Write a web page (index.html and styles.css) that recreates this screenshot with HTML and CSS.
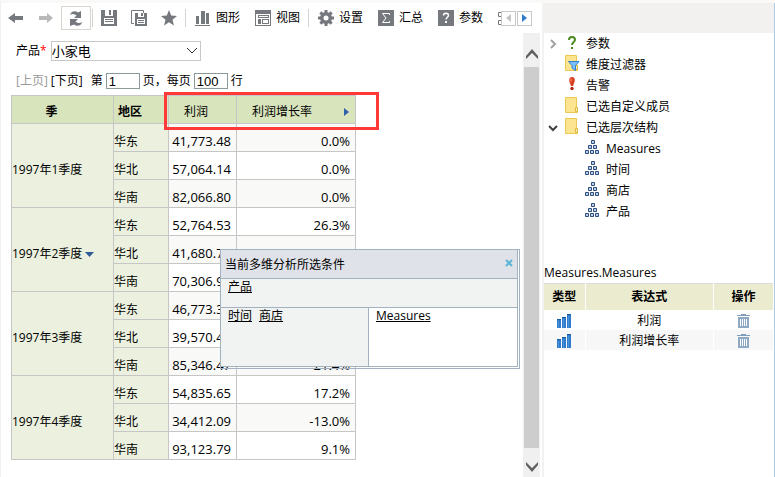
FILE: index.html
```html
<!DOCTYPE html>
<html lang="zh-CN">
<head>
    <meta charset="UTF-8">
    <meta name="viewport" content="width=device-width, initial-scale=1.0">
    <title>多维分析</title>
    <link rel="stylesheet" href="styles.css">
</head>
<body>
    <svg class="defs" aria-hidden="true">
        <symbol id="folder" viewBox="0 0 16 16">
            <path d="M.5 .5h11v10h1v5H.5z" fill="#fde490" stroke="#ecc850"/>
            <path d="M10.500 10.500h2v4h-2z" fill="#fff0b0" stroke="#e0b93c"/>
        </symbol>
        <symbol id="cube" viewBox="0 0 16 16">
            <path d="M6.500 1.500h3v3h-3zM3.500 6.500h3v3h-3zM8.500 6.500h3v3h-3zM.5 11.500h3v3h-3zM5.500 11.500h3v3h-3zM10.500 11.500h3v3h-3z" fill="#b9d3f2" stroke="#2f4d78"/>
        </symbol>
        <symbol id="bars" viewBox="0 0 16 16">
            <path d="M1 7h4v8H1zM6 5h4v10H6zM11 2h4v13h-4z" fill="#2f7ccd"/>
            <path d="M1 6h4v1H1zM6 4h4v1H6zM11 1h4v1h-4z" fill="#1c5a9e"/>
            <path d="M2 8h1v7H2zM7 6h1v9H7zM12 3h1v12h-1z" fill="#4a92da"/>
        </symbol>
        <symbol id="trash" viewBox="0 0 14 14">
            <path d="M4 0h5v1h4v1H0V1h4z" fill="#7f9cba"/>
            <path d="M1 3h11v11H1z" fill="#8fa9c4"/>
            <path d="M3 5h1v7H3zM5 5h1v7H5zM7 5h1v7H7zM9 5h1v7H9z" fill="#fff"/>
        </symbol>
    </svg>

    <main class="workspace">
        <div class="toolbar">
            <div class="tools">
                <button class="icon-btn" aria-label="后退"><svg width="16" height="16"><path d="M0 8l7-5v3h8v4H7v3z" fill="#75787c"/></svg></button>
                <button class="icon-btn" aria-label="前进"><svg width="16" height="16"><path d="M15 8L9 3v3H1v4h8v3z" fill="#b9b9b9"/></svg></button>
                <button class="icon-btn framed" aria-label="刷新"><svg width="16" height="18" fill="#75787c"><path d="M2 6c1-4 5-5 8-2.500L13 2v7H6l2.500-2.500C6 4.500 4 4.500 2 6z"/><path d="M14 13c-1 4-5 5-8 2.500L2 17v-7h8l-2.500 2.500c2.500 2 4.500 2 6.500.5z"/></svg></button>
                <span class="sep"></span>
                <button class="icon-btn" aria-label="保存"><svg width="16" height="16"><path d="M0 0h16v16H0z" fill="#75787c"/><path d="M4 0h8v6H4zM3 8h10v6H3z" fill="#fff"/><path d="M8 0h2v5H8zM4 9h8v1H4zM4 11h8v1H4z" fill="#75787c"/></svg></button>
                <button class="icon-btn" aria-label="另存为"><svg width="16" height="16"><path d="M3 13.500H.5V.5h12V3" fill="none" stroke="#75787c"/><path d="M4 3h12v13H4z" fill="#75787c"/><path d="M7 3h6v4H7zM6 9h8v5H6z" fill="#fff"/><path d="M10 3h2v3h-2zM7 10h6v1H7zM7 12h6v1H7z" fill="#75787c"/></svg></button>
                <button class="icon-btn" aria-label="收藏"><svg width="16" height="16"><path d="M8 0l2.200 5.500 5.800.4-4.500 3.800L13 15.500 8 12.300 3 15.500l1.500-5.800L0 5.900l5.800-.4z" fill="#75787c"/></svg></button>
                <span class="sep"></span>
                <button class="tool"><svg width="16" height="16"><path d="M1 6h3v8H1zM6 1h4v13H6zM11 3h3v11h-3zM0 15h15v1H0z" fill="#75787c"/></svg>图形</button>
                <button class="tool"><svg width="16" height="16"><path d="M0 0h16v16H0z" fill="#75787c"/><path d="M1 4h14v11H1z" fill="#fff"/><path d="M3 5h11v3H3zM3 9h3v5H3zM7 9h7v5H7z" fill="#75787c"/><path d="M4 6h9v1H4zM8 10h5v3H8z" fill="#fff"/></svg>视图</button>
                <span class="sep"></span>
                <button class="tool"><svg width="16" height="16"><g fill="#75787c"><path d="M6.500 0h3v16h-3z"/><path d="M6.500 0h3v16h-3z" transform="rotate(45 8 8)"/><path d="M6.500 0h3v16h-3z" transform="rotate(90 8 8)"/><path d="M6.500 0h3v16h-3z" transform="rotate(135 8 8)"/><circle cx="8" cy="8" r="6"/></g><circle cx="8" cy="8" r="2.500" fill="#fff"/></svg>设置</button>
                <button class="tool"><svg width="16" height="16"><path d="M0 0h16v16H0z" fill="#75787c"/><path d="M11.500 5V3.500h-7L8 8l-3.500 4.500h7V11" fill="none" stroke="#fff"/></svg>汇总</button>
                <button class="tool"><svg width="16" height="16"><path d="M0 0h16v16H0z" fill="#75787c"/><path d="M5.500 5.500c0-3 5-3 5 0 0 1.500-2.500 2-2.500 4" fill="none" stroke="#fff" stroke-width="1.500"/><path d="M7 11h2v2H7z" fill="#fff"/></svg>参数</button>
                <button class="tool" aria-label="更多"><svg width="16" height="16"><path d="M.5 2.500h4v4h-4zM.5 10.500h4v4h-4z" fill="none" stroke="#75787c"/></svg></button>
            </div>
            <button class="scroll-btn" aria-label="向左"><svg width="5" height="8"><path d="M5 0v8L0 4z" fill="#c4c4c4"/></svg></button>
            <button class="scroll-btn" aria-label="向右"><svg width="5" height="8"><path d="M0 0v8l5-4z" fill="#2f7ccd"/></svg></button>
        </div>

        <div class="view">
            <div class="report">
                <div class="param">
                    <label for="product">产品<span class="required">*</span></label>
                    <div class="select-box">
                        <select id="product"><option>小家电</option></select>
                        <svg width="12" height="7"><path d="M1 1l5 5 5-5" fill="none" stroke="#333"/></svg>
                    </div>
                </div>
                <div class="pager">
                    <a class="disabled">[上页]</a>
                    <a href="#">[下页]</a>
                    <label for="page">第</label>
                    <input type="text" id="page" value="1">
                    <label for="rows">页，每页</label>
                    <input type="text" id="rows" value="100">
                    <span>行</span>
                </div>

                <div class="grid-wrap">
                    <table class="pivot">
                        <colgroup>
                            <col class="c-quarter"><col class="c-region"><col class="c-profit"><col class="c-growth">
                        </colgroup>
                        <thead>
                            <tr>
                                <th>季</th>
                                <th>地区</th>
                                <th class="measure">利润</th>
                                <th class="measure"><div class="measure-head">利润增长率<svg width="5" height="8"><path d="M0 0v8l5-4z" fill="#2f62a8"/></svg></div></th>
                            </tr>
                        </thead>
                        <tbody>
                            <tr><th rowspan="3">1997年1季度</th><th>华东</th><td>41,773.48</td><td>0.0%</td></tr>
                            <tr><th>华北</th><td>57,064.14</td><td>0.0%</td></tr>
                            <tr><th>华南</th><td>82,066.80</td><td>0.0%</td></tr>
                            <tr><th rowspan="3">1997年2季度<svg class="drop" width="9" height="5"><path d="M0 0h9L4.500 5z" fill="#2f5a95"/></svg></th><th>华东</th><td>52,764.53</td><td>26.3%</td></tr>
                            <tr><th>华北</th><td>41,680.77</td><td>-27.0%</td></tr>
                            <tr><th>华南</th><td>70,306.94</td><td>-14.3%</td></tr>
                            <tr><th rowspan="3">1997年3季度</th><th>华东</th><td>46,773.34</td><td>-11.4%</td></tr>
                            <tr><th>华北</th><td>39,570.42</td><td>-5.1%</td></tr>
                            <tr><th>华南</th><td>85,346.47</td><td>21.4%</td></tr>
                            <tr><th rowspan="3">1997年4季度</th><th>华东</th><td>54,835.65</td><td>17.2%</td></tr>
                            <tr><th>华北</th><td>34,412.09</td><td>-13.0%</td></tr>
                            <tr><th>华南</th><td>93,123.79</td><td>9.1%</td></tr>
                        </tbody>
                    </table>

                    <div class="highlight"></div>

                    <section class="conditions">
                        <div class="conditions-inner">
                            <header>
                                <span>当前多维分析所选条件</span>
                                <button aria-label="关闭"><svg width="8" height="8"><path d="M1 1l6 6M7 1L1 7" stroke="#5bb4d6" stroke-width="2"/></svg></button>
                            </header>
                            <div class="slicer"><a href="#">产品</a></div>
                            <div class="axes">
                                <div class="axis-rows"><a href="#">时间</a><a href="#">商店</a></div>
                                <div class="axis-cols"><a href="#">Measures</a></div>
                            </div>
                        </div>
                    </section>
                </div>
            </div>

            <div class="scrollbar">
                <button aria-label="向上滚动"><svg width="12" height="10"><path d="M0 7l6-7 6 7v3L6 4l-6 6z" fill="#606060"/></svg></button>
                <div class="thumb"></div>
                <button aria-label="向下滚动"><svg width="12" height="10"><path d="M0 3l6 7 6-7V0L6 6 0 0z" fill="#606060"/></svg></button>
            </div>
        </div>
    </main>

    <aside class="sidebar">
        <div class="side-head"></div>
        <ul class="tree">
            <li>
                <svg width="10" height="10"><path d="M3 1l4 4-4 4" fill="none" stroke="#a0a0a0" stroke-width="2"/></svg>
                <svg class="node" width="16" height="16"><path d="M4 6c0-4 6-4 6 0C10 8 7 8 7 11" fill="none" stroke="#4d8a1e" stroke-width="2"/><path d="M6 13h2v2H6z" fill="#4d8a1e"/></svg>
                <span>参数</span>
            </li>
            <li>
                <i class="blank"></i>
                <svg class="node" width="16" height="16"><use href="#folder"/><path d="M3.500 6.500H14L10.500 10.500v5L7 13v-2.500z" fill="#7cc0fa" stroke="#2f7fd0"/></svg>
                <span>维度过滤器</span>
            </li>
            <li>
                <i class="blank"></i>
                <svg class="node" width="16" height="16"><path d="M7 1c3 0 3 3 2.500 5L8 10H6L4.500 6C4 4 4 1 7 1z" fill="#d8401f"/><circle cx="7" cy="12.500" r="1.700" fill="#b52a12"/><path d="M6 2.500v3" stroke="#f5a08a"/></svg>
                <span>告警</span>
            </li>
            <li>
                <i class="blank"></i>
                <svg class="node" width="16" height="16"><use href="#folder"/></svg>
                <span>已选自定义成员</span>
            </li>
            <li>
                <svg width="10" height="10"><path d="M1 3l4 4 4-4" fill="none" stroke="#404040" stroke-width="2"/></svg>
                <svg class="node" width="16" height="16"><use href="#folder"/></svg>
                <span>已选层次结构</span>
            </li>
            <li class="child"><svg class="node" width="16" height="16"><use href="#cube"/></svg><span>Measures</span></li>
            <li class="child"><svg class="node" width="16" height="16"><use href="#cube"/></svg><span>时间</span></li>
            <li class="child"><svg class="node" width="16" height="16"><use href="#cube"/></svg><span>商店</span></li>
            <li class="child"><svg class="node" width="16" height="16"><use href="#cube"/></svg><span>产品</span></li>
        </ul>

        <h2>Measures.Measures</h2>
        <table class="members">
            <colgroup><col class="m-type"><col><col class="m-action"></colgroup>
            <thead>
                <tr><th>类型</th><th>表达式</th><th>操作</th></tr>
            </thead>
            <tbody>
                <tr>
                    <td><svg width="16" height="16"><use href="#bars"/></svg></td>
                    <td>利润</td>
                    <td><button aria-label="删除利润"><svg width="14" height="14"><use href="#trash"/></svg></button></td>
                </tr>
                <tr>
                    <td><svg width="16" height="16"><use href="#bars"/></svg></td>
                    <td>利润增长率</td>
                    <td><button aria-label="删除利润增长率"><svg width="14" height="14"><use href="#trash"/></svg></button></td>
                </tr>
            </tbody>
        </table>
    </aside>
</body>
</html>
```
FILE: styles.css
```css
* {
    box-sizing: border-box;
}
body {
    margin: 0;
    min-height: 100vh;
    display: grid;
    grid-template-columns: 1fr 233px;
    border-top: 3px solid #faf9f7;
    border-left: 1px solid #efefed;
    background: #fff;
    color: #000;
    font-family: "Open Sans", "Noto Sans CJK SC", sans-serif;
    font-size: 12px;
    line-height: 16px;
}
button {
    padding: 0;
    border: 0;
    background: none;
    font: inherit;
    color: inherit;
    cursor: pointer;
}
svg {
    display: block;
    flex: none;
}
a {
    color: inherit;
}
.defs {
    position: absolute;
    width: 0;
    height: 0;
}
.workspace {
    display: flex;
    flex-direction: column;
    min-width: 0;
}

/* toolbar */
.toolbar {
    display: flex;
    align-items: center;
    height: 30px;
    padding-right: 10px;
}
.tools {
    display: flex;
    flex: 1;
    align-items: center;
    min-width: 0;
    overflow: hidden;
}
.icon-btn {
    display: flex;
    flex: none;
    align-items: center;
    justify-content: center;
    width: 30px;
    height: 24px;
}
.icon-btn.framed {
    border: 1px solid #d6d6ce;
}
.sep {
    flex: none;
    width: 1px;
    height: 18px;
    margin: 0 1px;
    background: #d4d4d4;
}
.tool {
    display: flex;
    flex: none;
    align-items: center;
    gap: 5px;
    width: 60px;
    padding-left: 8px;
    white-space: nowrap;
}
.scroll-btn {
    display: flex;
    flex: none;
    align-items: center;
    justify-content: center;
    width: 15px;
    height: 15px;
    border: 1px solid #c8c8c8;
}
.scroll-btn + .scroll-btn {
    margin-left: 1px;
}

/* report */
.view {
    display: flex;
    flex: 1;
}
.report {
    flex: 1;
    min-width: 0;
    padding: 8px 0 0 10px;
}
.param {
    display: flex;
    align-items: center;
    padding-left: 5px;
}
.required {
    color: #f00;
}
.select-box {
    position: relative;
    width: 150px;
    margin-left: 4px;
}
.select-box select {
    display: block;
    width: 100%;
    height: 20px;
    padding: 0;
    border: 1px solid #c8c8c8;
    border-radius: 0;
    background: #fff;
    appearance: none;
    font-family: inherit;
    font-size: 13px;
    color: #000;
}
.select-box svg {
    position: absolute;
    right: 3px;
    top: 6px;
    pointer-events: none;
}
.pager {
    display: flex;
    align-items: center;
    gap: 3px;
    padding: 12px 0 0 5px;
}
.pager a {
    text-decoration: none;
}
.pager .disabled {
    color: #999;
}
.pager label[for="page"] {
    padding-left: 5px;
}
.pager input {
    width: 34px;
    height: 16px;
    padding: 0 2px;
    border: 1px solid #8a9a9a;
    font: 13px "Liberation Sans", sans-serif;
}

.grid-wrap {
    position: relative;
    margin-top: 6px;
}
.pivot {
    table-layout: fixed;
    width: 345px;
    border-collapse: collapse;
}
.c-quarter {
    width: 102px;
}
.c-region {
    width: 55px;
}
.c-profit {
    width: 68px;
}
.pivot th,
.pivot td {
    height: 28px;
    padding: 7px 5px 0 0;
    border: 1px solid #c6c6c6;
    white-space: nowrap;
}
.pivot thead th {
    padding: 5px 22px 0 0;
    background: #d8e4bc;
}
.pivot thead .measure {
    padding: 5px 6px 0 15px;
    font-weight: normal;
    text-align: left;
}
.measure-head {
    display: flex;
    align-items: center;
    justify-content: space-between;
}
.pivot tbody th {
    padding-top: 8px;
    background: #ebf1de;
    font-weight: normal;
    text-align: left;
}
.pivot td {
    font-size: 13px;
    text-align: right;
}
.pivot tbody tr:nth-child(odd) td {
    background: #f9f9f8;
}
.drop {
    display: inline-block;
    margin-left: 3px;
    vertical-align: 1px;
}
.highlight {
    position: absolute;
    left: 153px;
    top: -3px;
    width: 215px;
    height: 38px;
    border: 3px solid #ff3838;
}

/* floating panel with the current axes */
.conditions {
    position: absolute;
    left: 209px;
    top: 154px;
    width: 300px;
    padding: 0 1px 1px 0;
    border: 1px solid #a3b2c1;
}
.conditions-inner {
    border: 1px solid #a3b2c1;
    border-width: 0 1px 1px 0;
    background: #fff;
}
.conditions header {
    display: flex;
    align-items: center;
    justify-content: space-between;
    height: 29px;
    padding: 0 4px;
    background: #dfe2e8;
    border-bottom: 1px solid #a3b2c1;
}
.conditions header span {
    padding-top: 2px;
}
.conditions header button {
    align-self: flex-start;
    padding-top: 9px;
}
.slicer {
    height: 29px;
    padding-left: 7px;
    background: #f1f3f2;
    border-bottom: 1px solid #a3b2c1;
}
.axes {
    display: grid;
    grid-template-columns: 1fr 1fr;
    height: 58px;
}
.axis-rows,
.axis-cols {
    display: flex;
    gap: 7px;
    padding-left: 7px;
}
.axis-rows {
    background: #f1f3f2;
    border-right: 1px solid #a3b2c1;
}

.scrollbar {
    display: flex;
    flex-direction: column;
    width: 17px;
    margin-right: 2px;
    padding: 0 1px;
    background: #f0f0f0;
}
.scrollbar button {
    display: flex;
    align-items: flex-end;
    justify-content: center;
    height: 34px;
    padding-bottom: 8px;
}
.scrollbar button:last-child {
    height: 29px;
    padding-bottom: 5px;
}
.thumb {
    flex: 1;
    background: #cdcdcd;
}

/* right side */
.sidebar {
    border-left: 2px solid #f2f2f0;
    border-right: 1px solid #a9cbea;
}
.side-head {
    height: 30px;
    background: #f2f1ef;
}
.tree {
    margin: 0;
    padding: 0 0 0 4px;
    list-style: none;
}
.tree li {
    display: flex;
    align-items: center;
    height: 21px;
}
.tree .node {
    margin-bottom: 3px;
}
.tree svg + svg,
.blank + svg {
    margin-left: 7px;
}
.tree span {
    margin-left: 5px;
}
.blank {
    width: 10px;
}
.tree .child {
    padding-left: 37px;
}
.sidebar h2 {
    margin: 43px 0 0;
    font-size: 12px;
    font-weight: normal;
    line-height: 16px;
}
.members {
    table-layout: fixed;
    width: 100%;
    margin-top: 2px;
    border-top: 1px solid #dcdcdc;
    border-collapse: collapse;
    text-align: center;
}
.m-type {
    width: 41px;
}
.m-action {
    width: 60px;
}
.members th {
    height: 26px;
    padding: 0;
    border-right: 1px solid #fff;
    background: #ebebcf;
}
.members td {
    height: 20px;
    padding: 2px 0 0;
    border-right: 1px solid #fff;
}
.members tbody tr:nth-child(even) td {
    background: #f7f7f7;
}
.members svg {
    margin: 0 auto;
}
.members button {
    display: block;
    margin: 0 auto;
}
```
